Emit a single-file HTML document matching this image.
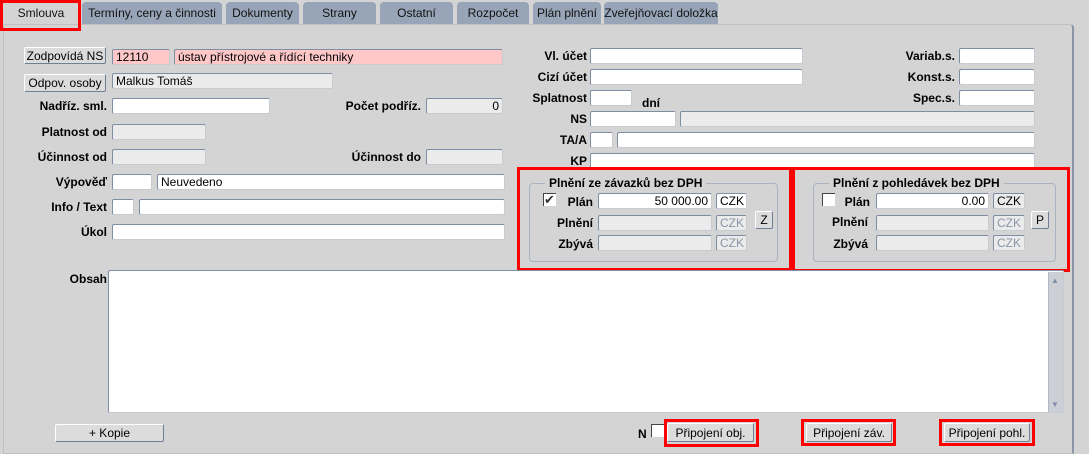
<!DOCTYPE html>
<html><head><meta charset="utf-8"><style>
*{box-sizing:border-box;margin:0;padding:0}
body{width:1089px;height:446px;background:#d4d4d4;font-family:"Liberation Sans",sans-serif;font-size:12px;color:#000;position:relative;overflow:hidden}
.a{position:absolute}
.tab{position:absolute;top:2px;height:22px;background:#98a5b8;border-radius:4px 4px 0 0;text-align:center;line-height:22px;font-size:12px;color:#111}
.in{position:absolute;height:16px;background:#fff;border:1px solid #7f8ea4;border-right-color:#c8ccd2;border-bottom-color:#c8ccd2;border-radius:2px;font-size:12px;line-height:14px;padding:0 3px;white-space:nowrap;overflow:hidden}
.g{background:#ebebeb}
.p{background:#ffc8c8}
.lb{position:absolute;font-weight:bold;font-size:12px;text-align:right;white-space:nowrap}
.bt{position:absolute;background:#dcdcdc;border:1px solid #fff;border-right-color:#6f7f96;border-bottom-color:#6f7f96;border-radius:2px;font-size:12px;display:flex;align-items:center;justify-content:center;white-space:nowrap}
.red{position:absolute;border:3px solid #f00}
.grp{position:absolute;border:1px solid #a9b3c0;border-radius:4px}
.gt{position:absolute;background:#d4d4d4;font-weight:bold;padding:0 4px}
.cz{color:#8a96a8}
.cb{position:absolute;width:13px;height:13px;background:#fff;border-top:1px solid #444;border-left:1px solid #444}
</style></head><body>
<div class="a" style="left:3px;top:24px;width:1071px;height:430px;border:1px solid #c0c0c0;border-right:2px solid #8a96a8;border-radius:0 4px 0 0"></div>
<div class="tab" style="left:4px;width:74px;background:#d4d4d4">Smlouva</div>
<div class="red" style="left:0;top:0;width:81px;height:31px"></div>
<div class="tab" style="left:82px;width:140px">Termíny, ceny a činnosti</div>
<div class="tab" style="left:226px;width:73px">Dokumenty</div>
<div class="tab" style="left:303px;width:73px">Strany</div>
<div class="tab" style="left:380px;width:73px">Ostatní</div>
<div class="tab" style="left:457px;width:72px">Rozpočet</div>
<div class="tab" style="left:533px;width:68px">Plán plnění</div>
<div class="tab" style="left:604px;width:114px">Zveřejňovací doložka</div>

<div class="bt" style="left:24px;top:47px;width:82px;height:17px">Zodpovídá NS</div>
<div class="in p" style="left:112px;top:49px;width:58px">12110</div>
<div class="in p" style="left:174px;top:49px;width:329px">ústav přístrojové a řídící techniky</div>
<div class="bt" style="left:24px;top:74px;width:82px;height:18px">Odpov. osoby</div>
<div class="in g" style="left:112px;top:73px;width:221px">Malkus Tomáš</div>
<div class="lb" style="left:0;top:99px;width:107px">Nadříz. sml.</div>
<div class="in" style="left:112px;top:98px;width:158px"></div>
<div class="lb" style="left:300px;top:99px;width:121px">Počet podříz.</div>
<div class="in g" style="left:426px;top:98px;width:77px;text-align:right">0</div>
<div class="lb" style="left:0;top:125px;width:107px">Platnost od</div>
<div class="in g" style="left:112px;top:124px;width:94px"></div>
<div class="lb" style="left:0;top:150px;width:107px">Účinnost od</div>
<div class="in g" style="left:112px;top:149px;width:94px"></div>
<div class="lb" style="left:300px;top:150px;width:121px">Účinnost do</div>
<div class="in g" style="left:426px;top:149px;width:77px"></div>
<div class="lb" style="left:0;top:175px;width:107px">Výpověď</div>
<div class="in" style="left:112px;top:174px;width:40px"></div>
<div class="in" style="left:157px;top:174px;width:348px">Neuvedeno</div>
<div class="lb" style="left:0;top:200px;width:107px">Info / Text</div>
<div class="in" style="left:112px;top:199px;width:22px"></div>
<div class="in" style="left:139px;top:199px;width:366px"></div>
<div class="lb" style="left:0;top:225px;width:107px">Úkol</div>
<div class="in" style="left:112px;top:224px;width:393px"></div>

<div class="lb" style="left:500px;top:49px;width:87px">Vl. účet</div>
<div class="in" style="left:590px;top:48px;width:213px"></div>
<div class="lb" style="left:500px;top:70px;width:87px">Cizí účet</div>
<div class="in" style="left:590px;top:69px;width:213px"></div>
<div class="lb" style="left:500px;top:91px;width:87px">Splatnost</div>
<div class="in" style="left:590px;top:90px;width:42px"></div>
<div class="lb" style="left:642px;top:96px">dní</div>
<div class="lb" style="left:500px;top:112px;width:87px">NS</div>
<div class="in" style="left:590px;top:111px;width:86px"></div>
<div class="in g" style="left:680px;top:111px;width:355px"></div>
<div class="lb" style="left:500px;top:133px;width:87px">TA/A</div>
<div class="in" style="left:590px;top:132px;width:23px"></div>
<div class="in" style="left:617px;top:132px;width:418px"></div>
<div class="lb" style="left:500px;top:154px;width:87px">KP</div>
<div class="in" style="left:590px;top:153px;width:445px"></div>
<div class="lb" style="left:860px;top:49px;width:95px">Variab.s.</div>
<div class="in" style="left:959px;top:48px;width:76px"></div>
<div class="lb" style="left:860px;top:70px;width:95px">Konst.s.</div>
<div class="in" style="left:959px;top:69px;width:76px"></div>
<div class="lb" style="left:860px;top:91px;width:95px">Spec.s.</div>
<div class="in" style="left:959px;top:90px;width:76px"></div>

<div class="grp" style="left:529px;top:183px;width:249px;height:79px"></div>
<div class="gt" style="left:545px;top:176px">Plnění ze závazků bez DPH</div>
<div class="cb" style="left:543px;top:193px;font-size:13px;line-height:11px;color:#333">✔</div>
<div class="lb" style="left:540px;top:195px;width:53px">Plán</div>
<div class="in" style="left:598px;top:193px;width:114px;text-align:right">50 000.00</div>
<div class="in" style="left:716px;top:193px;width:31px">CZK</div>
<div class="lb" style="left:540px;top:216px;width:53px">Plnění</div>
<div class="in g" style="left:598px;top:215px;width:114px"></div>
<div class="in g cz" style="left:716px;top:215px;width:31px">CZK</div>
<div class="bt" style="left:755px;top:211px;width:18px;height:18px">Z</div>
<div class="lb" style="left:540px;top:237px;width:53px">Zbývá</div>
<div class="in g" style="left:598px;top:235px;width:114px"></div>
<div class="in g cz" style="left:716px;top:235px;width:31px">CZK</div>
<div class="red" style="left:517px;top:167px;width:275px;height:104px"></div>

<div class="grp" style="left:813px;top:183px;width:243px;height:79px"></div>
<div class="gt" style="left:829px;top:176px">Plnění z pohledávek bez DPH</div>
<div class="cb" style="left:822px;top:193px"></div>
<div class="lb" style="left:820px;top:195px;width:50px">Plán</div>
<div class="in" style="left:876px;top:193px;width:113px;text-align:right">0.00</div>
<div class="in g" style="left:993px;top:193px;width:32px">CZK</div>
<div class="lb" style="left:820px;top:215px;width:48px">Plnění</div>
<div class="in g" style="left:876px;top:215px;width:113px"></div>
<div class="in g cz" style="left:993px;top:215px;width:32px">CZK</div>
<div class="bt" style="left:1031px;top:211px;width:18px;height:18px">P</div>
<div class="lb" style="left:820px;top:237px;width:48px">Zbývá</div>
<div class="in g" style="left:876px;top:235px;width:113px"></div>
<div class="in g cz" style="left:993px;top:235px;width:32px">CZK</div>
<div class="red" style="left:792px;top:167px;width:278px;height:105px"></div>

<div class="lb" style="left:40px;top:272px;width:67px">Obsah</div>
<div class="in" style="left:108px;top:270px;width:956px;height:143px"></div>
<div class="a" style="left:1048px;top:272px;width:15px;height:140px;background:#ccd0d6;border-left:1px solid #b0b8c4"></div>
<div class="a" style="left:1051px;top:276px;color:#7f8ea4;font-size:8px">▲</div>
<div class="a" style="left:1051px;top:400px;color:#7f8ea4;font-size:8px">▼</div>

<div class="bt" style="left:55px;top:424px;width:109px;height:18px">+ Kopie</div>
<div class="lb" style="left:638px;top:427px">N</div>
<div class="cb" style="left:651px;top:424px"></div>
<div class="bt" style="left:667px;top:423px;width:87px;height:19px">Připojení obj.</div>
<div class="red" style="left:664px;top:419px;width:95px;height:28px"></div>
<div class="bt" style="left:806px;top:423px;width:86px;height:19px">Připojení záv.</div>
<div class="red" style="left:801px;top:419px;width:95px;height:27px"></div>
<div class="bt" style="left:944px;top:423px;width:86px;height:19px">Připojení pohl.</div>
<div class="red" style="left:939px;top:419px;width:96px;height:27px"></div>
</body></html>
